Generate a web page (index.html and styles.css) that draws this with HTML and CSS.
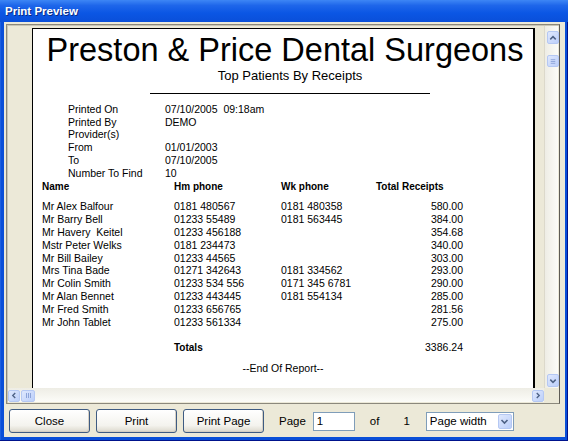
FILE: index.html
```html
<!DOCTYPE html>
<html lang="en">
<head>
  <meta charset="UTF-8" />
  <title>Print Preview</title>
  <link rel="stylesheet" href="styles.css">
</head>
<body>
  <div class="window">
    <div class="titlebar"><span class="title">Print Preview</span></div>
    <div class="frame">
      <div class="client">
        <div class="viewer">
          <div class="canvas">
            <div class="page">
              <h1 class="practice">Preston &amp; Price Dental Surgeons</h1>
              <h2 class="report-title">Top Patients By Receipts</h2>
              <div class="rule"></div>

              <div class="criteria">
                <span>Printed On</span><span>07/10/2005&nbsp; 09:18am</span>
                <span>Printed By</span><span>DEMO</span>
                <span>Provider(s)</span><span></span>
                <span>From</span><span>01/01/2003</span>
                <span>To</span><span>07/10/2005</span>
                <span>Number To Find</span><span>10</span>
              </div>

              <div class="patients head">
                <span>Name</span>
                <span>Hm phone</span>
                <span>Wk phone</span>
                <span>Total Receipts</span>
              </div>

              <div class="patients rows">
                <span>Mr Alex Balfour</span><span>0181 480567</span><span>0181 480358</span><span class="amt">580.00</span>
                <span>Mr Barry Bell</span><span>01233 55489</span><span>0181 563445</span><span class="amt">384.00</span>
                <span>Mr Havery&nbsp; Keitel</span><span>01233 456188</span><span></span><span class="amt">354.68</span>
                <span>Mstr Peter Welks</span><span>0181 234473</span><span></span><span class="amt">340.00</span>
                <span>Mr Bill Bailey</span><span>01233 44565</span><span></span><span class="amt">303.00</span>
                <span>Mrs Tina Bade</span><span>01271 342643</span><span>0181 334562</span><span class="amt">293.00</span>
                <span>Mr Colin Smith</span><span>01233 534 556</span><span>0171 345 6781</span><span class="amt">290.00</span>
                <span>Mr Alan Bennet</span><span>01233 443445</span><span>0181 554134</span><span class="amt">285.00</span>
                <span>Mr Fred Smith</span><span>01233 656765</span><span></span><span class="amt">281.56</span>
                <span>Mr John Tablet</span><span>01233 561334</span><span></span><span class="amt">275.00</span>
              </div>

              <div class="patients totals">
                <span></span>
                <span class="total-label">Totals</span>
                <span></span>
                <span class="amt">3386.24</span>
              </div>

              <div class="end-note">--End Of Report--</div>
            </div>
          </div>

          <div class="vscroll">
            <div class="sb-btn">
              <svg width="11" height="12" viewBox="0 0 11 12"><path d="M2.5 7.5 L5.5 4.5 L8.5 7.5" fill="none" stroke="#4d6185" stroke-width="1.6"/></svg>
            </div>
            <div class="sb-thumb v">
              <svg width="11" height="11" viewBox="0 0 11 11"><path d="M3 3.5h5M3 5.5h5M3 7.5h5" stroke="#8ca3d8" stroke-width="1"/></svg>
            </div>
            <div class="sb-fill"></div>
            <div class="sb-btn">
              <svg width="11" height="12" viewBox="0 0 11 12"><path d="M2.5 4.5 L5.5 7.5 L8.5 4.5" fill="none" stroke="#4d6185" stroke-width="1.6"/></svg>
            </div>
          </div>

          <div class="hscroll">
            <div class="sb-btn">
              <svg width="12" height="11" viewBox="0 0 12 11"><path d="M7.5 2.5 L4.5 5.5 L7.5 8.5" fill="none" stroke="#4d6185" stroke-width="1.6"/></svg>
            </div>
            <div class="sb-thumb h">
              <svg width="11" height="11" viewBox="0 0 11 11"><path d="M3.5 3v5M5.5 3v5M7.5 3v5" stroke="#8ca3d8" stroke-width="1"/></svg>
            </div>
            <div class="sb-fill"></div>
            <div class="sb-btn">
              <svg width="12" height="11" viewBox="0 0 12 11"><path d="M4.5 2.5 L7.5 5.5 L4.5 8.5" fill="none" stroke="#4d6185" stroke-width="1.6"/></svg>
            </div>
          </div>
          <div class="corner"></div>
        </div>

        <div class="toolbar">
          <button class="btn">Close</button>
          <button class="btn">Print</button>
          <button class="btn">Print Page</button>
          <span class="label page-label">Page</span>
          <div class="field">1</div>
          <span class="label of-label">of</span>
          <span class="label count">1</span>
          <div class="select">
            <span>Page width</span>
            <span class="drop">
              <svg width="11" height="11" viewBox="0 0 11 11"><path d="M2.5 4 L5.5 7 L8.5 4" fill="none" stroke="#4d6185" stroke-width="1.6"/></svg>
            </span>
          </div>
        </div>
      </div>
    </div>
  </div>
</body>
</html>
```

FILE: styles.css
```css
* {
  box-sizing: border-box;
}

body {
  margin: 0;
  font-family: 'Liberation Sans', Arial, sans-serif;
}

.window {
  width: 568px;
  height: 441px;
  display: flex;
  flex-direction: column;
  overflow: hidden;
}

.titlebar {
  height: 22px;
  flex: none;
  display: flex;
  align-items: center;
  padding-left: 5px;
  background: linear-gradient(#3d86f5 0%, #1e66ea 25%, #0b56e4 60%, #0a4fd9 100%);
}

.title {
  color: #fff;
  font-size: 11.5px;
  font-weight: bold;
  text-shadow: 1px 1px 0 #0a2c84;
}

.frame {
  flex: 1;
  display: flex;
  padding: 0 3px 4px 4px;
  background: #0a4fd8;
  box-shadow: inset -1px -1px 0 #00138c, inset 1px 0 0 #1c5fe0;
}

.client {
  flex: 1;
  display: flex;
  flex-direction: column;
  padding: 2px 5px 0 2px;
  background: #ece9d8;
}

/* preview area with its scrollbars */
.viewer {
  height: 380px;
  display: grid;
  grid-template-columns: 1fr 14px;
  grid-template-rows: 1fr 14px;
  border: 1px solid #8b887c;
  border-right-color: #5e5c55;
  box-shadow: inset 1px 1px 0 #c9c6b6;
  padding: 1px;
}

.canvas {
  overflow: hidden;
  padding: 2px 9px 0 24px;
  background: #ece9d8;
}

.page {
  height: 420px;
  background: #fff;
  border: 1px solid #000;
  border-right-width: 2px;
  color: #000;
}

.practice {
  margin: 0;
  padding: 5px 0 0 4px;
  font-size: 32.5px;
  line-height: 32px;
  font-weight: normal;
  text-align: center;
}

.report-title {
  margin: 3px 0 0;
  padding-left: 14px;
  font-size: 13px;
  line-height: 14px;
  font-weight: normal;
  text-align: center;
}

.rule {
  width: 280px;
  height: 1px;
  background: #000;
  margin: 10px 0 0 117px;
}

.criteria {
  display: grid;
  grid-template-columns: 97px auto;
  margin: 9px 0 0 35px;
  font-size: 10.5px;
  line-height: 12.7px;
}

.patients {
  display: grid;
  grid-template-columns: 132px 107px 95px 87px;
  padding-left: 9px;
}

.patients .amt {
  text-align: right;
}

.head {
  margin-top: 1px;
  font-size: 10px;
  font-weight: bold;
  line-height: 13px;
}

.rows {
  margin-top: 7px;
  font-size: 10.5px;
  line-height: 12.85px;
}

.totals {
  margin-top: 12px;
  font-size: 10.5px;
  line-height: 13px;
}

.total-label {
  font-weight: bold;
  font-size: 10px;
}

.end-note {
  margin-top: 8px;
  font-size: 10.5px;
  line-height: 13px;
  text-align: center;
}

/* scrollbars */
.vscroll {
  display: flex;
  flex-direction: column;
  padding: 5px 0 1px 2px;
  background: linear-gradient(90deg, #eeede5, #fcfcf8);
  border-left: 1px solid #dcd9cb;
}

.hscroll {
  display: flex;
  align-items: center;
  padding-top: 1px;
  background: linear-gradient(#eeede5, #fcfcf8);
}

.corner {
  background: #ece9d8;
}

.sb-btn,
.sb-thumb {
  width: 12px;
  height: 12px;
  flex: none;
  display: flex;
  align-items: center;
  justify-content: center;
  border: 1px solid #b5c8f3;
  border-radius: 2px;
  background: linear-gradient(135deg, #dfe8fd, #bccffa);
}

.vscroll .sb-btn {
  height: 13px;
}

.sb-thumb.v {
  margin-top: 11px;
}

.sb-thumb.h {
  margin-left: 1px;
  width: 14px;
}

.sb-fill {
  flex: 1;
}

/* bottom toolbar */
.toolbar {
  flex: 1;
  display: flex;
  align-items: center;
  padding: 1px 0 0 3px;
}

.btn {
  width: 81px;
  height: 24px;
  margin-right: 6px;
  font-family: 'Liberation Sans', Arial, sans-serif;
  font-size: 11.5px;
  color: #000;
  border: 1px solid #3e5b82;
  border-radius: 3px;
  background: linear-gradient(#ffffff, #f4f3ee 70%, #dcd8cc);
  box-shadow: inset -1px -1px 0 #d6d0c4;
}

.label {
  font-size: 11.5px;
}

.page-label {
  margin-left: 9px;
}

.field {
  width: 42px;
  height: 19px;
  margin-left: 7px;
  padding: 2px 0 0 3px;
  border: 1px solid #7f9db9;
  background: #fff;
  font-size: 11.5px;
}

.of-label {
  margin-left: 15px;
}

.count {
  margin-left: 24px;
}

.select {
  width: 88px;
  height: 19px;
  margin-left: 16px;
  display: flex;
  align-items: center;
  justify-content: space-between;
  padding: 0 1px 0 3px;
  border: 1px solid #7f9db9;
  background: #fff;
  font-size: 11.5px;
}

.drop {
  width: 14px;
  height: 15px;
  display: flex;
  align-items: center;
  justify-content: center;
  border: 1px solid #b5c8f3;
  border-radius: 2px;
  background: linear-gradient(135deg, #dfe8fd, #bccffa);
}
```
